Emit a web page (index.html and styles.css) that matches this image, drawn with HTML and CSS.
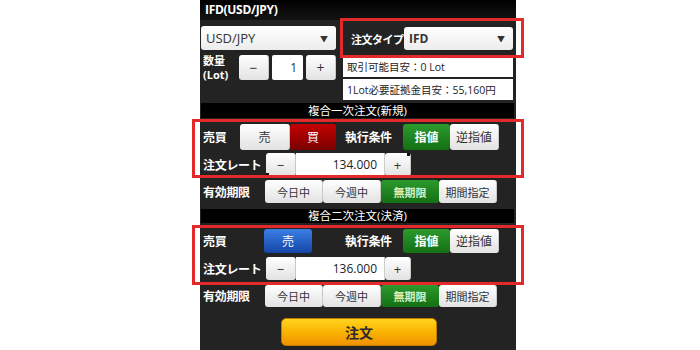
FILE: index.html
```html
<!DOCTYPE html>
<html lang="ja">
<head>
<meta charset="utf-8">
<title>IFD(USD/JPY)</title>
<link rel="stylesheet" href="styles.css">
</head>
<body>
<div class="page">
  <div class="panel">
    <div class="title">IFD(USD/JPY)</div>
    <div class="top">
      <div class="left-col">
        <div class="select sym"><span>USD/JPY</span><span class="arrow">▼</span></div>
        <div class="qty">
          <div class="qty-label"><span>数量</span><span>(Lot)</span></div>
          <div class="btn w30">−</div>
          <div class="num">1</div>
          <div class="btn w30">+</div>
        </div>
      </div>
      <div class="right-col">
        <div class="type-row">
          <span class="type-label">注文タイプ</span>
          <div class="select type"><span>IFD</span><span class="arrow">▼</span></div>
        </div>
        <div class="info">取引可能目安：0 Lot</div>
        <div class="info second">1Lot必要証拠金目安：55,160円</div>
      </div>
    </div>

    <div class="sec">複合一次注文(新規)</div>
    <div class="row side-row">
      <span class="lbl l37">売買</span>
      <div class="btn w50">売</div>
      <div class="btn red w46">買</div>
      <span class="lbl exec">執行条件</span>
      <div class="btn green w47">指値</div>
      <div class="btn w49">逆指値</div>
    </div>
    <div class="row rate-row">
      <span class="lbl l63">注文レート</span>
      <div class="btn w30 mark-bl">−</div>
      <div class="rate">134.000</div>
      <div class="btn w26 mark-tr">+</div>
    </div>
    <div class="row exp-row">
      <span class="lbl l62">有効期限</span>
      <div class="btn w58 sm">今日中</div>
      <div class="btn w58 sm">今週中</div>
      <div class="btn green w58 soft sm">無期限</div>
      <div class="btn w58 sm">期間指定</div>
    </div>

    <div class="sec sec2">複合二次注文(決済)</div>
    <div class="row side-row2">
      <span class="lbl l37">売買</span>
      <div class="btn blue w48 off24">売</div>
      <span class="lbl exec2">執行条件</span>
      <div class="btn green w47">指値</div>
      <div class="btn w49">逆指値</div>
    </div>
    <div class="row rate-row2">
      <span class="lbl l63">注文レート</span>
      <div class="btn w30">−</div>
      <div class="rate">136.000</div>
      <div class="btn w26">+</div>
    </div>
    <div class="row exp-row2">
      <span class="lbl l62">有効期限</span>
      <div class="btn w58 sm">今日中</div>
      <div class="btn w58 sm">今週中</div>
      <div class="btn green w58 soft sm">無期限</div>
      <div class="btn w58 sm">期間指定</div>
    </div>

    <div class="order">注文</div>
  </div>

  <div class="hl hl-type"></div>
  <div class="hl hl-first"></div>
  <div class="hl hl-second"></div>
</div>
</body>
</html>
```

FILE: styles.css
```css
html, body {
  margin: 0;
  padding: 0;
  background: #ffffff;
}
body {
  width: 700px;
  height: 350px;
  overflow: hidden;
  font-family: "Open Sans", "Noto Sans CJK JP", sans-serif;
}
.page {
  position: relative;
  width: 700px;
  height: 350px;
}
.panel {
  margin-left: 200px;
  width: 316px;
  height: 350px;
  background: #232323;
  display: flex;
  flex-direction: column;
  color: #fff;
}
.title {
  height: 20px;
  line-height: 20px;
  padding-left: 5px;
  background: linear-gradient(#000000, #141414);
  font-size: 12px;
  font-weight: 700;
  letter-spacing: -0.3px;
}
.top {
  display: grid;
  grid-template-columns: 135px 171px;
  column-gap: 7px;
  padding: 6px 0 0 1px;
}
.left-col, .right-col {
  display: flex;
  flex-direction: column;
}
.select {
  box-sizing: border-box;
  background: linear-gradient(#ffffff, #ececec);
  border-radius: 3px;
  color: #333;
  display: flex;
  align-items: center;
  justify-content: space-between;
  padding: 0 8px 0 5px;
}
.sym {
  height: 24px;
  font-size: 13px;
}
.arrow {
  font-size: 8px;
  color: #333;
}
.qty {
  margin-top: 5px;
  height: 25px;
  display: flex;
  align-items: stretch;
  gap: 3px;
}
.qty-label {
  width: 33px;
  font-size: 11px;
  font-weight: 700;
  line-height: 14px;
  padding-left: 2px;
  margin-top: -1px;
  display: flex;
  flex-direction: column;
  white-space: nowrap;
}
.num {
  width: 31px;
  background: #fff;
  border-radius: 2px;
  color: #333;
  font-size: 12px;
  display: flex;
  align-items: center;
  justify-content: flex-end;
  padding-right: 6px;
  box-sizing: border-box;
}
.type-row {
  margin-top: 1px;
  height: 23px;
  display: flex;
  align-items: center;
}
.type-label {
  width: 61px;
  padding-left: 8px;
  box-sizing: border-box;
  font-size: 11px;
  font-weight: 700;
  letter-spacing: -0.5px;
}
.type {
  width: 109px;
  height: 23px;
  font-size: 12px;
  font-weight: 700;
}
.info {
  margin-top: 6px;
  height: 21px;
  background: #fff;
  color: #222;
  font-size: 10.5px;
  display: flex;
  align-items: center;
  padding-left: 4px;
  margin-right: 1px;
}
.info.second {
  margin-top: 2px;
}
.sec {
  margin: 3px 2px 0 1px;
  height: 15px;
  background: #000;
  font-size: 11.5px;
  line-height: 15px;
  text-align: center;
}
.sec2 {
  margin-top: 6px;
  height: 14px;
  line-height: 14px;
}
.row {
  display: flex;
  align-items: stretch;
  padding-left: 3px;
}
.lbl {
  font-size: 12px;
  font-weight: 700;
  display: flex;
  align-items: center;
  letter-spacing: -0.3px;
}
.l37 { width: 37px; }
.l62 { width: 62px; }
.l63 { width: 63px; }
.exec { margin-left: 9px; width: 58px; }
.exec2 { margin-left: 33px; width: 58px; }
.side-row { margin-top: 6px; height: 26px; }
.rate-row { margin-top: 3px; height: 23px; }
.exp-row { margin-top: 4px; height: 23px; }
.side-row2 { margin-top: 6px; height: 24px; }
.rate-row2 { margin-top: 4px; height: 23px; }
.exp-row2 { margin-top: 5px; height: 22px; }

.btn {
  box-sizing: border-box;
  background: linear-gradient(#ffffff, #e2e2e2);
  color: #333;
  border-radius: 3px;
  font-size: 12px;
  display: flex;
  align-items: center;
  justify-content: center;
  border-right: 1px solid #c8c8c8;
  position: relative;
}
.btn.sm { font-size: 11px; }
.btn.red {
  background: linear-gradient(#c40000, #7a0000);
  color: #fff;
  border-right: none;
}
.btn.green {
  background: linear-gradient(#2d9a2d, #137013);
  color: #fff;
  font-weight: 700;
  border-right: none;
}
.btn.green.soft {
  color: #d8f0c8;
}
.btn.blue {
  background: linear-gradient(#3a7fe6, #1546a6);
  color: #fff;
  border-right: none;
}
.w26 { width: 26px; }
.w30 { width: 30px; }
.w46 { width: 46px; }
.w47 { width: 47px; }
.w48 { width: 48px; }
.w49 { width: 49px; }
.w50 { width: 50px; }
.w58 { width: 58px; }
.off24 { margin-left: 24px; }
.qty .btn { font-size: 14px; }
.rate-row .btn, .rate-row2 .btn { font-size: 13px; }
.rate {
  width: 89px;
  background: #fff;
  color: #222;
  font-size: 12px;
  display: flex;
  align-items: center;
  justify-content: flex-end;
  padding-right: 7px;
  box-sizing: border-box;
  border-right: 1px solid #ccc;
}
.mark-bl::after {
  content: "";
  position: absolute;
  left: 0;
  bottom: 0;
  width: 3px;
  height: 3px;
  background: #111;
}
.mark-tr::after {
  content: "";
  position: absolute;
  right: 0;
  top: 0;
  width: 3px;
  height: 3px;
  background: #111;
}
.order {
  margin: 11px 0 0 81px;
  width: 156px;
  height: 28px;
  box-sizing: border-box;
  border: 1px solid #c07a00;
  border-radius: 5px;
  background: linear-gradient(#ffd41e, #f9b300 50%, #f29100);
  color: #2a2a2a;
  font-size: 14px;
  font-weight: 700;
  display: flex;
  align-items: center;
  justify-content: center;
}
.hl {
  position: absolute;
  box-sizing: border-box;
  border: 3px solid #e32a2a;
}
.hl-type {
  left: 340px;
  top: 18px;
  width: 184px;
  height: 40px;
}
.hl-first {
  left: 192px;
  top: 119px;
  width: 332px;
  height: 59px;
}
.hl-second {
  left: 192px;
  top: 225px;
  width: 332px;
  height: 60px;
}
```
